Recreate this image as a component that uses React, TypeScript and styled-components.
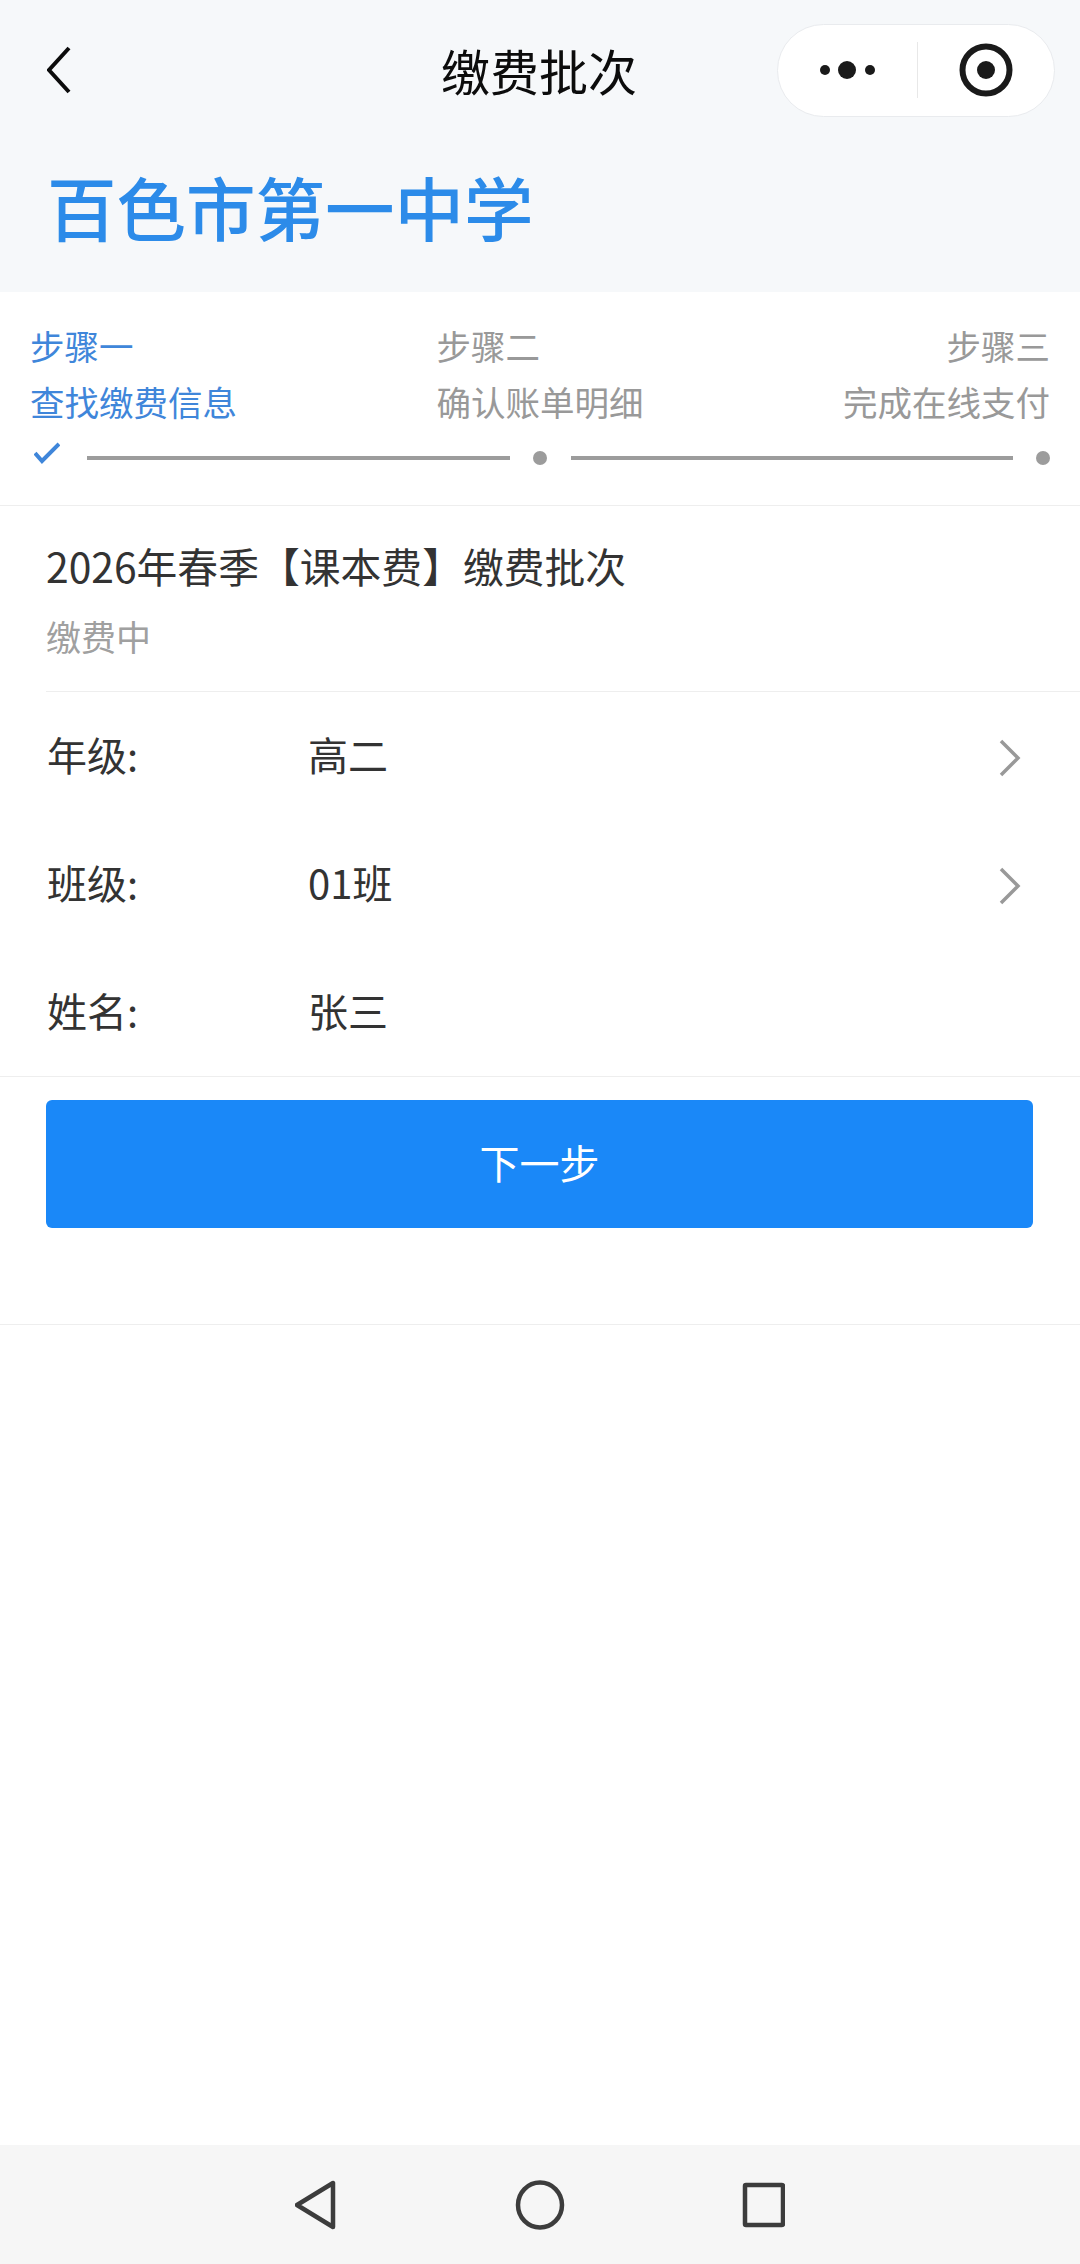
import styled, { createGlobalStyle } from 'styled-components';

const GlobalStyle = createGlobalStyle`
  html, body {
    margin: 0;
    padding: 0;
    background: #fff;
  }
  * {
    box-sizing: border-box;
  }
  body {
    font-family: "Noto Sans CJK SC", "Noto Sans", sans-serif;
  }
`;

const Page = styled.div`
  width: 1080px;
  height: 2264px;
  display: flex;
  flex-direction: column;
  overflow: hidden;
  background: #fff;
`;

const Header = styled.header`
  height: 292px;
  background: #f6f8fa;
`;

const NavBar = styled.div`
  height: 140px;
  padding: 0 25px 0 47px;
  display: grid;
  grid-template-columns: 300px 1fr 300px;
  align-items: center;
`;

const NavTitle = styled.h1`
  margin: 0;
  padding-right: 24px;
  text-align: center;
  font-size: 49px;
  line-height: 60px;
  font-weight: 400;
  color: #0c0c0c;
`;

const Capsule = styled.div`
  justify-self: end;
  width: 278px;
  height: 93px;
  border: 1px solid #e9ebee;
  border-radius: 47px;
  background: #fff;
  display: grid;
  grid-template-columns: 139px 1px 1fr;
  align-items: center;
  justify-items: center;
`;

const CapsuleDivider = styled.span`
  width: 1px;
  height: 56px;
  background: #e8e8e8;
`;

const SchoolName = styled.h2`
  margin: 0;
  padding: 0 0 20px 47px;
  font-size: 69.5px;
  line-height: 132px;
  font-weight: 500;
  color: #2c8be9;
`;

const Stepper = styled.section`
  padding: 25px 30px 20px;
  border-bottom: 1px solid #eeeeee;
`;

const StepLabels = styled.div`
  display: flex;
  justify-content: space-between;
`;

const StepLabel = styled.div<{ $active?: boolean; $right?: boolean }>`
  width: 207px;
  font-size: 34.5px;
  line-height: 56px;
  white-space: nowrap;
  text-align: ${(p) => (p.$right ? 'right' : 'left')};
  color: ${(p) => (p.$active ? '#3f86da' : '#999999')};
`;

const Progress = styled.div`
  height: 56px;
  padding-top: 2px;
  display: flex;
  align-items: center;
`;

const Tick = styled.svg`
  flex: none;
  width: 26px;
  height: 22px;
  margin: -10px 27px 0 4px;
`;

const ProgressLine = styled.span<{ $width: number }>`
  flex: none;
  width: ${(p) => p.$width}px;
  height: 4px;
  margin-right: 23px;
  background: #9c9c9c;
`;

const ProgressDot = styled.span`
  flex: none;
  width: 14px;
  height: 14px;
  margin-right: 24px;
  border-radius: 50%;
  background: #9c9c9c;
`;

const BatchInfo = styled.section`
  margin-left: 46px;
  padding: 32px 0 27px;
  border-bottom: 1px solid #eeeeee;
`;

const BatchTitle = styled.div`
  font-size: 40.8px;
  line-height: 56px;
  color: #333333;
`;

const BatchStatus = styled.div`
  margin-top: 14px;
  font-size: 35px;
  line-height: 56px;
  color: #a0a0a0;
`;

const Fields = styled.section`
  padding-left: 47px;
  border-bottom: 1px solid #eeeeee;
`;

const Field = styled.div`
  height: 128px;
  padding: 0 58px 4px 0;
  display: grid;
  grid-template-columns: 261px 1fr auto;
  align-items: center;
  font-size: 40px;
  color: #333333;
`;

const Chevron = styled.svg`
  width: 24px;
  height: 38px;
  margin-top: 8px;
`;

const Actions = styled.section`
  padding: 23px 47px 96px 46px;
  border-bottom: 1px solid #eeeeee;
`;

const NextButton = styled.button`
  display: block;
  width: 100%;
  height: 128px;
  padding: 0 0 4px;
  border: 0;
  border-radius: 6px;
  background: #1a88f8;
  color: #fff;
  font-family: inherit;
  font-size: 40px;
`;

const Spacer = styled.div`
  flex: 1;
`;

const SystemBar = styled.footer`
  height: 119px;
  padding: 0 295px;
  background: #f6f6f6;
  display: flex;
  justify-content: space-between;
  align-items: center;
`;

const SystemIcon = styled.svg`
  width: 50px;
  height: 50px;
  fill: none;
  stroke: #3c3c3c;
  stroke-width: 4.5;
  stroke-linejoin: round;
`;

const steps = [
  { label: '步骤一', desc: '查找缴费信息', active: true },
  { label: '步骤二', desc: '确认账单明细' },
  { label: '步骤三', desc: '完成在线支付', right: true },
];

const fields = [
  { label: '年级:', value: '高二', more: true },
  { label: '班级:', value: '01班', more: true },
  { label: '姓名:', value: '张三' },
];

export default function App() {
  return (
    <Page>
      <GlobalStyle />
      <Header>
        <NavBar>
          <svg width="26" height="48" viewBox="0 0 26 48" fill="none">
            <path d="M22 2 2 24l20 22" stroke="#0c0c0c" strokeWidth="4" />
          </svg>
          <NavTitle>缴费批次</NavTitle>
          <Capsule>
            <svg width="60" height="20" viewBox="0 0 60 20" fill="#1a1a1a">
              <circle cx="7" cy="10" r="5" />
              <circle cx="29" cy="10" r="9" />
              <circle cx="52" cy="10" r="5" />
            </svg>
            <CapsuleDivider />
            <svg width="54" height="54" viewBox="0 0 54 54" fill="none">
              <circle cx="27" cy="27" r="23.5" stroke="#1a1a1a" strokeWidth="6" />
              <circle cx="27" cy="27" r="9" fill="#1a1a1a" />
            </svg>
          </Capsule>
        </NavBar>
        <SchoolName>百色市第一中学</SchoolName>
      </Header>

      <Stepper>
        <StepLabels>
          {steps.map((step) => (
            <StepLabel key={step.label} $active={step.active} $right={step.right}>
              {step.label}
              <br />
              {step.desc}
            </StepLabel>
          ))}
        </StepLabels>
        <Progress>
          <Tick viewBox="0 0 26 22" fill="none">
            <path d="M1 11l7 8L25 2" stroke="#3f86da" strokeWidth="4" />
          </Tick>
          <ProgressLine $width={423} />
          <ProgressDot />
          <ProgressLine $width={442} />
          <ProgressDot />
        </Progress>
      </Stepper>

      <BatchInfo>
        <BatchTitle>2026年春季【课本费】缴费批次</BatchTitle>
        <BatchStatus>缴费中</BatchStatus>
      </BatchInfo>

      <Fields>
        {fields.map((field) => (
          <Field key={field.label}>
            <span>{field.label}</span>
            <span>{field.value}</span>
            {field.more && (
              <Chevron viewBox="0 0 24 38" fill="none">
                <path d="M3 2l17 17L3 36" stroke="#999999" strokeWidth="3.5" />
              </Chevron>
            )}
          </Field>
        ))}
      </Fields>

      <Actions>
        <NextButton>下一步</NextButton>
      </Actions>

      <Spacer />

      <SystemBar>
        <SystemIcon viewBox="0 0 50 50">
          <path d="M2 25 38 3v44z" />
        </SystemIcon>
        <SystemIcon viewBox="0 0 50 50">
          <ellipse cx="25" cy="25" rx="22" ry="22.5" />
        </SystemIcon>
        <SystemIcon viewBox="0 0 50 50">
          <rect x="10" y="5" width="38" height="40" rx="1" />
        </SystemIcon>
      </SystemBar>
    </Page>
  );
}
